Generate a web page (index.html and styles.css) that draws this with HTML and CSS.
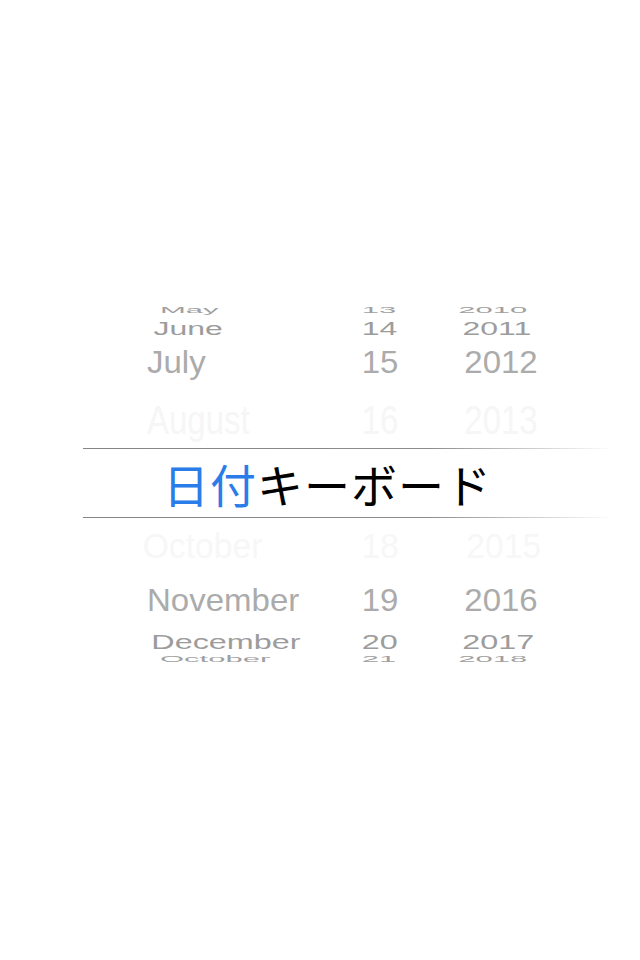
FILE: index.html
```html
<!DOCTYPE html>
<html lang="ja">
<head>
<meta charset="utf-8">
<title>日付キーボード</title>
<link rel="stylesheet" href="styles.css">
</head>
<body>
<div class="picker">
  <div class="row r-may"><span class="m">May</span><span class="d">13</span><span class="y">2010</span></div>
  <div class="row r-june"><span class="m">June</span><span class="d">14</span><span class="y">2011</span></div>
  <div class="row r-july"><span class="m">July</span><span class="d">15</span><span class="y">2012</span></div>
  <div class="row r-aug"><span class="m">August</span><span class="d">16</span><span class="y">2013</span></div>
  <div class="band"><span class="title"><span class="blue">日付</span>キーボード</span></div>
  <div class="row r-oct"><span class="m">October</span><span class="d">18</span><span class="y">2015</span></div>
  <div class="row r-nov"><span class="m">November</span><span class="d">19</span><span class="y">2016</span></div>
  <div class="row r-dec"><span class="m">December</span><span class="d">20</span><span class="y">2017</span></div>
  <div class="row r-oct2"><span class="m">October</span><span class="d">21</span><span class="y">2018</span></div>
</div>
</body>
</html>
```
FILE: styles.css
```css
html, body {
  margin: 0;
  padding: 0;
  background: #ffffff;
}
body {
  width: 640px;
  height: 960px;
  overflow: hidden;
  font-family: "Liberation Sans", Arial, sans-serif;
}
.picker {
  padding-top: 300px;
  display: flex;
  flex-direction: column;
}
.row {
  display: grid;
  grid-template-columns: 193px 80px 162px;
  padding-left: 147px;
  align-items: center;
  font-size: 33px;
  line-height: 1;
  color: #a9a9a9;
  transform-origin: 363px 50%;
  white-space: nowrap;
}
.row .m { text-align: left; }
.row .d { text-align: center; }
.row .y { text-align: center; }

.r-may  { height: 16px; transform: scale(0.94, 0.27); color: #a0a0a0; }
.r-june { height: 18px; transform: scale(0.97, 0.55); color: #9c9c9c; }
.r-july { height: 57px; transform: scale(1, 0.93); color: #ababab; }
.r-aug  { height: 57px; transform: scale(1, 1.22); color: #f6f6f6; }
.r-oct  { height: 54px; transform: scale(1.02, 1.05); color: #f7f7f7; }
.r-nov  { height: 57px; transform: scale(1, 0.93); color: #ababab; }
.r-dec  { height: 16px; transform: scale(0.98, 0.6); color: #9c9c9c; }
.r-oct2 { height: 24px; transform: scale(0.94, 0.29); color: #a0a0a0; }

.band {
  margin-left: 83px;
  width: 530px;
  height: 70px;
  display: flex;
  align-items: center;
  padding-left: 80px;
  box-sizing: border-box;
  border-top: 1px solid transparent;
  border-bottom: 1px solid transparent;
  border-left: 0;
  border-right: 0;
  border-image: linear-gradient(to right, #858585 0%, #8c8c8c 65%, rgba(210,210,210,0) 100%) 1;
}
.title {
  font-family: "Noto Sans CJK JP", "Noto Sans CJK SC", sans-serif;
  font-size: 46px;
  line-height: 1;
  letter-spacing: 1px;
  color: #000000;
}
.blue {
  color: #2a7de8;
}
```
